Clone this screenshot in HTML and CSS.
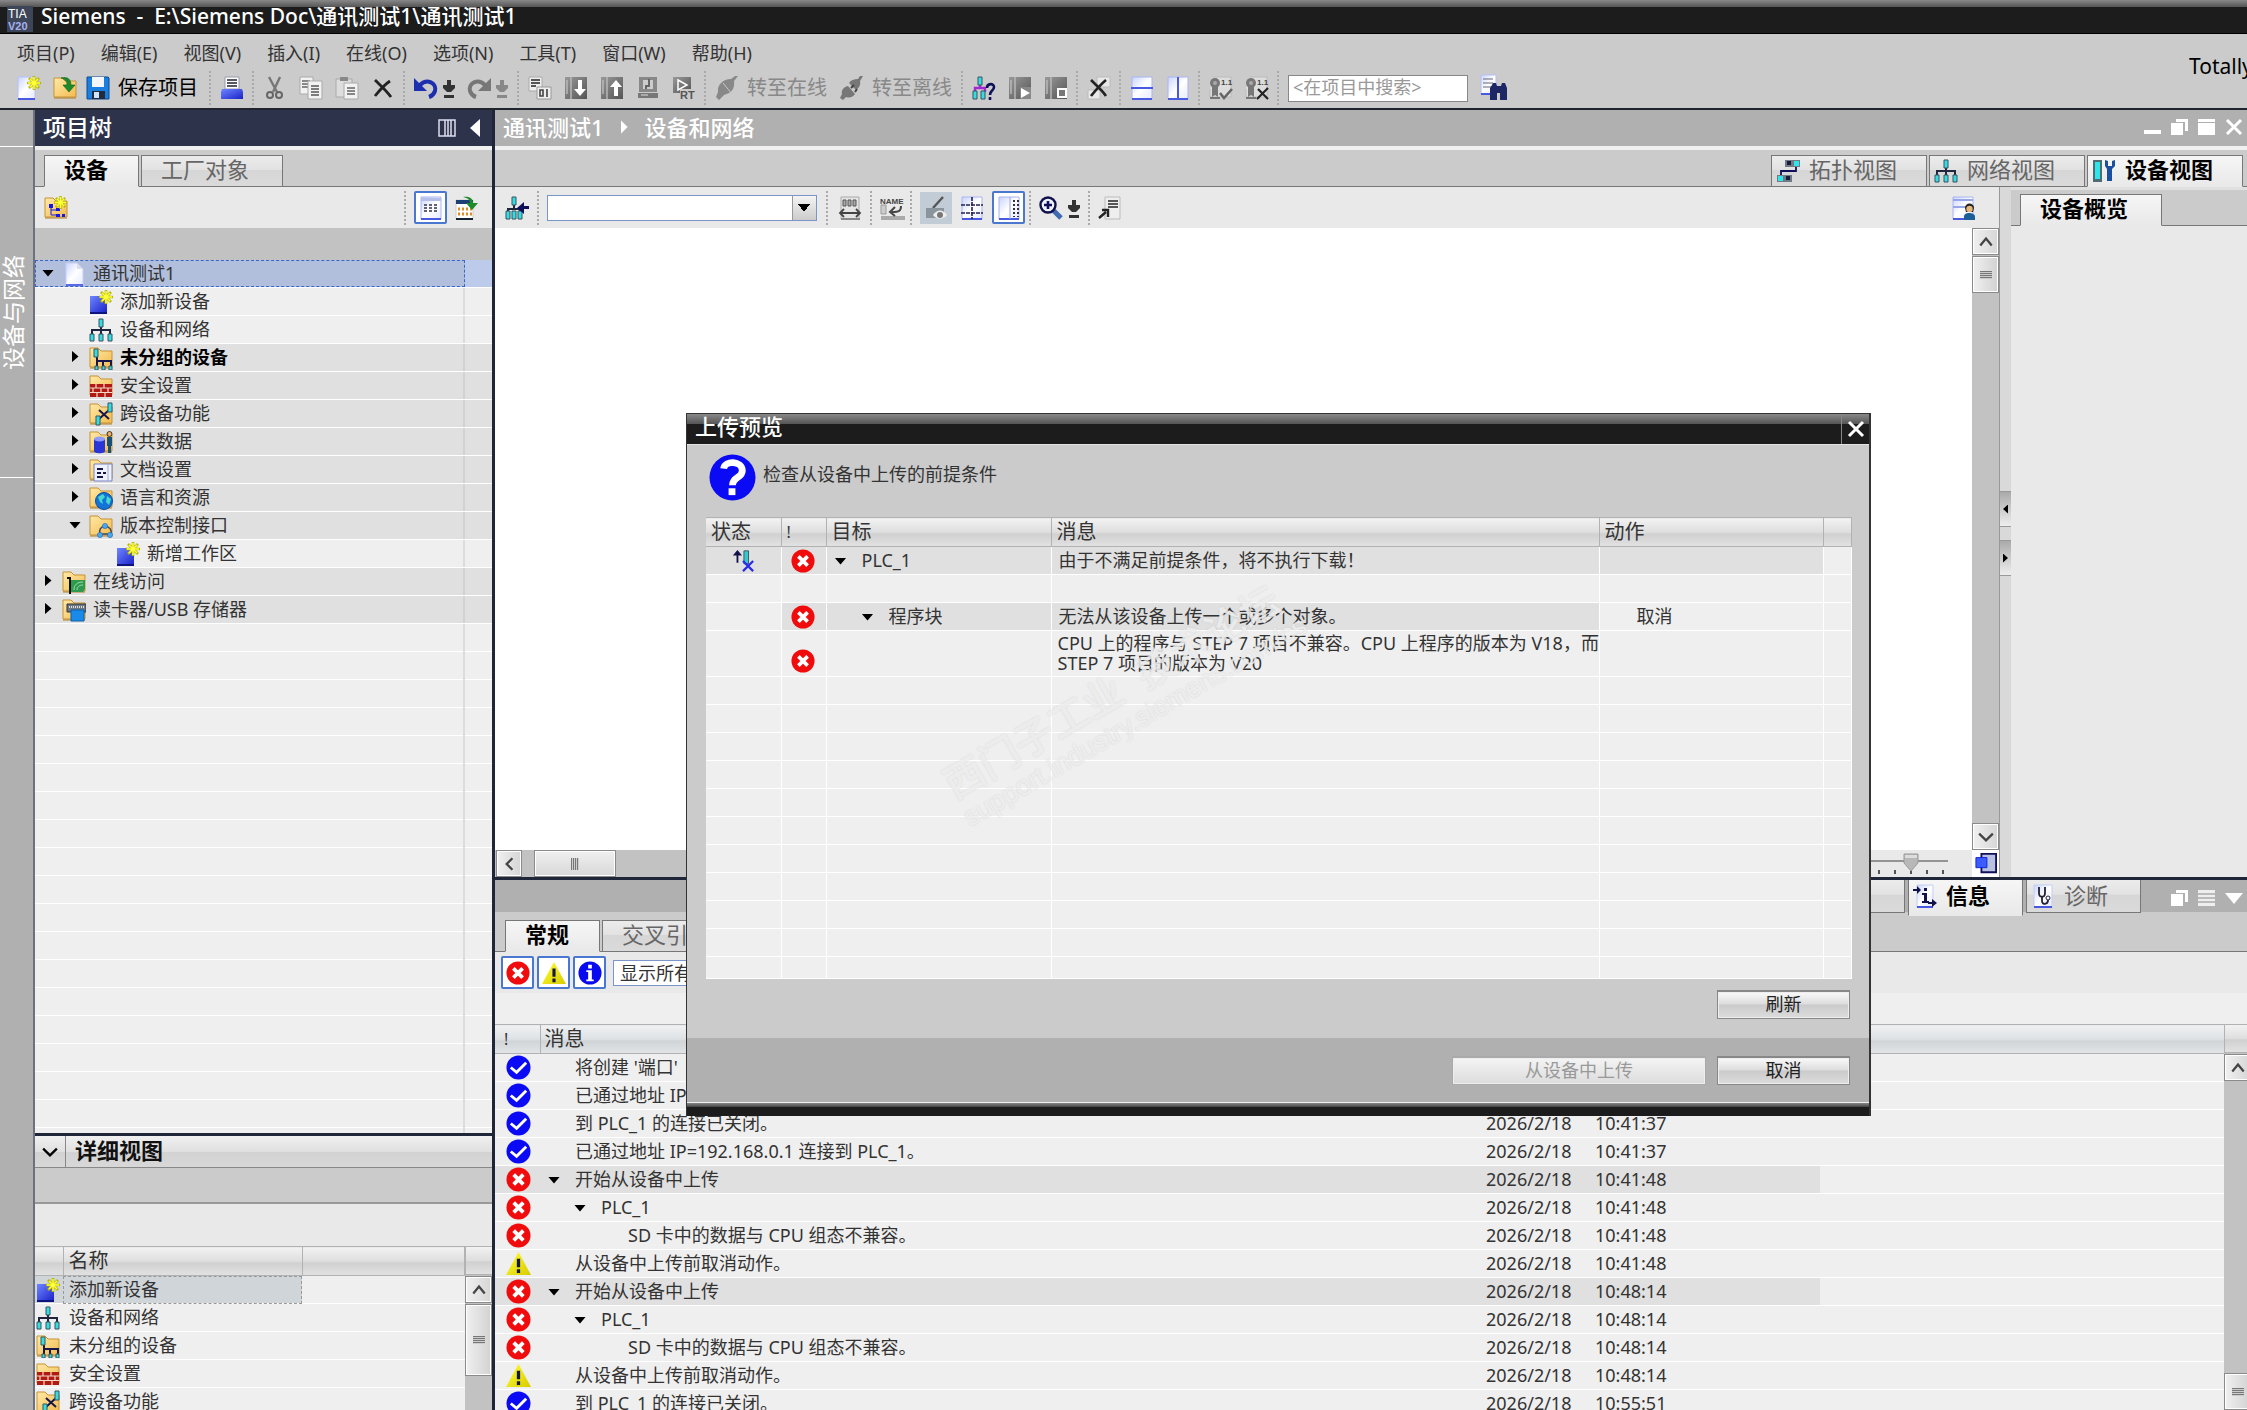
FILE: index.html
```html
<!DOCTYPE html>
<html lang="zh-CN">
<head>
<meta charset="utf-8">
<title>Siemens - 通讯测试1</title>
<link rel="stylesheet" href="styles.css">
</head>
<body>
<svg class="sprite" aria-hidden="true">
<defs>
<linearGradient id="gBlue" x1="0" y1="0" x2="1" y2="1"><stop offset="0" stop-color="#6f86ff"/><stop offset="1" stop-color="#1a22c8"/></linearGradient>
<linearGradient id="gPage" x1="0" y1="0" x2="1" y2="1"><stop offset="0" stop-color="#c9d4ff"/><stop offset=".5" stop-color="#fff"/><stop offset="1" stop-color="#e6eaff"/></linearGradient>
<linearGradient id="gFold" x1="0" y1="0" x2="1" y2="1"><stop offset="0" stop-color="#ffe9a8"/><stop offset="1" stop-color="#f2bb50"/></linearGradient>
<linearGradient id="gGray" x1="0" y1="0" x2="1" y2="1"><stop offset="0" stop-color="#999"/><stop offset="1" stop-color="#555"/></linearGradient>
<linearGradient id="gYel" x1="0" y1="0" x2="1" y2="1"><stop offset="0" stop-color="#ff3"/><stop offset="1" stop-color="#d8cc00"/></linearGradient>
<symbol id="star" viewBox="0 0 14 14"><path d="M7 0v14M0 7h14M2 2l10 10M12 2L2 12" stroke="#b9b800" stroke-width="2.6"/><path d="M7 1v12M1 7h12M3 3l8 8M11 3l-8 8" stroke="#ffff3c" stroke-width="1.5"/></symbol>
<symbol id="sheet" viewBox="0 0 24 24"><path d="M2 1h20v22H2z" fill="url(#gPage)" stroke="#aab4f0"/><path d="M2 23h20" stroke="#4a5ae0" stroke-width="2"/></symbol>
<symbol id="gsheet" viewBox="0 0 24 24"><path d="M3 1h18v22H3z" fill="#e4e4e4" stroke="#aaa"/><path d="M3 23h19" stroke="#888" stroke-width="2"/></symbol>
<symbol id="folder" viewBox="0 0 24 24"><path d="M1 21V2h8l3 3h11v16z" fill="url(#gFold)" stroke="#c79332"/><path d="M1 22h22" stroke="#b07c20"/></symbol>
<symbol id="new" viewBox="0 0 24 24"><path d="M1 1h17v22H1z" fill="url(#gPage)" stroke="#b4c0f4"/><path d="M1 23h17" stroke="#4a5ae0" stroke-width="2"/><use href="#star" x="10" y="0" width="14" height="14"/></symbol>
<symbol id="open" viewBox="0 0 24 24"><use href="#folder"/><path d="M8 2c7-2 10 2 10 7h4l-6 7-6-7h4c0-4-2-6-6-7z" fill="#1d8a2c" stroke="#0d5f18" stroke-width=".6"/></symbol>
<symbol id="save" viewBox="0 0 24 24"><path d="M1 1h21l1 1v21H1z" fill="#1b7fe0" stroke="#0a4a96"/><path d="M6 1h12v10H6z" fill="#f4f6fa"/><path d="M6 15h13v8H6z" fill="#222a3c"/><path d="M8 16h5v6H8z" fill="#cfe4ff"/></symbol>
<symbol id="print" viewBox="0 0 24 24"><path d="M5 1h14v12H5z" fill="#fff" stroke="#99a"/><path d="M7 4h10M7 7h10M7 10h10" stroke="#223" stroke-width="1.6"/><path d="M2 13h20l1 3v7H1v-7z" fill="url(#gBlue)"/></symbol>
<symbol id="cut" viewBox="0 0 24 24"><path d="M6 1l8 15M17 1L10 16" stroke="#777" stroke-width="2.4"/><circle cx="7" cy="19" r="3" fill="none" stroke="#666" stroke-width="2"/><circle cx="16" cy="19" r="3" fill="none" stroke="#666" stroke-width="2"/></symbol>
<symbol id="copy" viewBox="0 0 24 24"><path d="M1 1h13v17H1z" fill="#f2f2f2" stroke="#aaa"/><path d="M3 5h8M3 8h8M3 11h8" stroke="#666" stroke-width="1.5"/><path d="M9 5h14v18H9z" fill="#f2f2f2" stroke="#aaa"/><path d="M12 10h8M12 13h8M12 16h8M12 19h8" stroke="#555" stroke-width="1.5"/></symbol>
<symbol id="paste" viewBox="0 0 24 24"><path d="M1 3h16v18H1z" fill="#ddd" stroke="#aaa"/><path d="M5 1h8v4H5z" fill="#888"/><path d="M9 7h14v16H9z" fill="#f2f2f2" stroke="#aaa"/><path d="M12 12h8M12 15h8M12 18h8" stroke="#666" stroke-width="1.5"/></symbol>
<symbol id="x" viewBox="0 0 24 24"><path d="M4 4c5 5 11 10 16 17M19 5C13 9 8 15 4 20" stroke="#222" stroke-width="2.8" fill="none"/></symbol>
<symbol id="undo" viewBox="0 0 24 24"><path d="M6 9c7-7 17-2 15 6-1 3-3 5-6 6" fill="none" stroke="#1c2fae" stroke-width="4"/><path d="M0 2v13h13z" fill="#1c2fae"/></symbol>
<symbol id="redo" viewBox="0 0 24 24"><path d="M18 9C11 2 1 7 3 15c1 3 3 5 6 6" fill="none" stroke="#777" stroke-width="4"/><path d="M24 2v13H11z" fill="#777"/></symbol>
<symbol id="dd" viewBox="0 0 12 24"><path d="M4 4h4v5h4v3l-4 4H4l-4-4V9h4zM1 19h10v3H1z" fill="currentColor"/></symbol>
<symbol id="compile" viewBox="0 0 24 24"><path d="M1 1h13v14H1z" fill="#eee" stroke="#aaa"/><path d="M3 4h9M3 7h9M3 10h5" stroke="#555" stroke-width="1.8"/><path d="M9 11h14v12H9z" fill="#eee" stroke="#999"/><path d="M12 14h3v6h-3zM19 13v8" fill="none" stroke="#444" stroke-width="1.6"/></symbol>
<symbol id="rack" viewBox="0 0 24 24"><path d="M1 1h22v22H1z" fill="url(#gGray)"/><path d="M7 1v22M3 4v14" stroke="#bbb" stroke-width="1.4"/></symbol>
<symbol id="down" viewBox="0 0 24 24"><use href="#rack"/><path d="M14 4h4v9h4l-6 7-6-7h4z" fill="#fff"/></symbol>
<symbol id="up" viewBox="0 0 24 24"><use href="#rack"/><path d="M14 20h4v-9h4l-6-7-6 7h4z" fill="#fff"/></symbol>
<symbol id="pc" viewBox="0 0 24 24"><path d="M3 1h18v15H3z" fill="#888"/><path d="M7 4h10v9H7z" fill="#ccc"/><path d="M13 3v7h-3v3" stroke="#666" stroke-width="2" fill="none"/><path d="M2 17h20v5H2z" fill="#777"/><path d="M5 19h7" stroke="#ddd"/></symbol>
<symbol id="rt" viewBox="0 0 24 24"><path d="M1 1h18v16H1z" fill="url(#gGray)"/><path d="M6 4l9 5-9 5z" fill="none" stroke="#fff" stroke-width="1.5"/><path d="M8 13h16v11H8z" fill="#cbcbcb"/><text x="8" y="23" font-family="Liberation Sans" font-size="11" font-weight="bold" fill="#555">RT</text></symbol>
<symbol id="plug" viewBox="0 0 24 24"><path d="M23 0l-4 5c1 7-2 12-10 14l-5 5-3-3 2-5C2 9 8 3 16 3l4-3z" fill="#888"/><path d="M8 7l9 11" stroke="#c8c8c8"/></symbol>
<symbol id="unplug" viewBox="0 0 24 24"><path d="M23 0l-3 5c1 4-1 7-4 9L9 7c2-3 5-4 9-4l2-3zM8 10l7 8c-3 4-6 4-9 3l-3 3-3-2 2-4c-1-3 1-7 6-8z" fill="#777"/><path d="M11 12l3-3M15 16l2-3" stroke="#444" stroke-width="2"/></symbol>
<symbol id="net" viewBox="0 0 24 24"><path d="M12 8v4M3 16v-4h18v4M12 12v4" fill="none" stroke="#20263e" stroke-width="2"/><g fill="#35dce0" stroke="#375560"><path d="M10 1h4v8h-4zM1 16h4v7H1zM10 16h4v7h-4zM19 16h4v7h-4z"/></g></symbol>
<symbol id="netq" viewBox="0 0 24 24"><path d="M8 8v4M3 16v-4h10v4" fill="none" stroke="#a02ad0" stroke-width="2.4"/><g fill="#35dce0" stroke="#375560"><path d="M6 1h4v8H6zM1 15h4v8H1zM9 15h4v8H9z"/></g><path d="M15 12c0-5 7-5 7-1 0 4-4 3-4 8M18 21v3" fill="none" stroke="#10105a" stroke-width="2.6"/></symbol>
<symbol id="start" viewBox="0 0 24 24"><use href="#rack"/><path d="M12 11h11v12H12z" fill="#888"/><path d="M13 12l9 5-9 5z" fill="#fff"/></symbol>
<symbol id="stop" viewBox="0 0 24 24"><use href="#rack"/><path d="M14 13h8v8h-8z" fill="#777" stroke="#fff" stroke-width="2"/></symbol>
<symbol id="xdoc" viewBox="0 0 24 24"><path d="M10 1h13v10H10zM1 14h12v9H1z" fill="#e8e8e8" stroke="#bbb"/><path d="M4 4c5 5 11 10 15 16M19 4C13 9 8 15 4 20" stroke="#222" stroke-width="2.6" fill="none"/></symbol>
<symbol id="hsplit" viewBox="0 0 24 24"><use href="#sheet"/><path d="M1 12h22" stroke="#4a5ae0" stroke-width="2"/></symbol>
<symbol id="vsplit" viewBox="0 0 24 24"><use href="#sheet"/><path d="M12 1v22" stroke="#4a5ae0" stroke-width="2"/></symbol>
<symbol id="cert" viewBox="0 0 24 24"><path d="M4 1h18v20H1v-8" fill="#ddd" stroke="#bbb"/><path d="M1 22h10" stroke="#777" stroke-width="2"/><circle cx="6" cy="7" r="5" fill="#777"/><path d="M3 11h6v10l-3-2-3 2z" fill="#777"/><circle cx="6" cy="7" r="2" fill="#aaa"/><text x="12" y="9" font-family="Liberation Sans" font-size="8" font-weight="bold" fill="#444">1.1</text></symbol>
<symbol id="certok" viewBox="0 0 24 24"><use href="#cert"/><path d="M11 17l4 5 8-9" fill="none" stroke="#666" stroke-width="2.6"/></symbol>
<symbol id="certx" viewBox="0 0 24 24"><use href="#cert"/><path d="M13 13l10 10M23 12L12 23" fill="none" stroke="#222" stroke-width="2.2"/></symbol>
<symbol id="find" viewBox="0 0 28 28"><path d="M1 1h15v19H1z" fill="url(#gPage)" stroke="#b4c0f4"/><path d="M3 5h10M3 9h10M3 13h10" stroke="#667" stroke-width="1.2"/><path d="M1 20h12" stroke="#4a5ae0" stroke-width="2"/><path d="M12 11l1-2h3l1 3h4l1-3h3l2 5v12h-7v-7h-3v7h-7V14z" fill="#1d2766"/></symbol>
<symbol id="newgrp" viewBox="0 0 24 24"><use href="#folder"/><path d="M5 8h4v4H5zM12 12h4v3h-4zM12 18h4v3h-4zM18 18h3v3h-3z" fill="#1518e0"/><path d="M7 12v7h5M7 14h5" stroke="#1518e0" fill="none"/><use href="#star" x="10" y="0" width="13" height="13"/></symbol>
<symbol id="list" viewBox="0 0 24 24"><use href="#sheet"/><path d="M2 2h20v3H2z" fill="#b5bfe8"/><path d="M5 9h15M5 12h15M5 15h15" stroke="#334" stroke-width="1.500" stroke-dasharray="3 2"/></symbol>
<symbol id="export" viewBox="0 0 24 24"><path d="M1 4h17v19H1z" fill="#fff" stroke="#ccc"/><path d="M1 4h17v4H1z" fill="#1d3f78"/><path d="M3 13h14M3 18h14" stroke="#e08a20" stroke-width="3" stroke-dasharray="2 2"/><path d="M1 23h17" stroke="#123" stroke-width="2"/><path d="M8 1c7-1 10 2 10 6h5l-6 7-6-7h4c0-3-2-5-7-6z" fill="#1d8a2c"/></symbol>
<symbol id="netarrow" viewBox="0 0 24 24"><path d="M9 8v5M3 17v-4h12v4" fill="none" stroke="#20263e" stroke-width="2"/><g fill="#35dce0" stroke="#375560"><path d="M7 1h4v8H7zM1 15h4v8H1zM7 15h4v8H7zM13 15h4v8h-4z"/></g><path d="M24 10h-5V6l-7 6 7 6v-5h5z" fill="#10105a"/></symbol>
<symbol id="ruler" viewBox="0 0 24 24"><use href="#gsheet"/><path d="M5 4h3v6H5zM10 4h3v6h-3zM15 4h3v6h-3z" fill="#aaa" stroke="#555"/><path d="M2 17h20M6 13l-4 4 4 4M18 13l4 4-4 4" fill="none" stroke="#444" stroke-width="1.8"/></symbol>
<symbol id="name" viewBox="0 0 26 24"><text x="0" y="8" font-family="Liberation Sans" font-size="8" font-weight="bold" fill="#444">NAME</text><path d="M1 9h5v9H1z" fill="#ccc" stroke="#999"/><path d="M1 20h24v4H1z" fill="#aaa"/><path d="M21 10c0 5-2 6-9 6M15 11l-5 5 5 4" fill="none" stroke="#444" stroke-width="2"/></symbol>
<symbol id="eye" viewBox="0 0 24 24"><path d="M19 1L9 12" stroke="#555" stroke-width="2.4"/><path d="M2 12h18v10H2z" fill="#8a949c"/><path d="M9 19c4-6 10-6 14 0-4 5-10 5-14 0z" fill="#eee"/><circle cx="16" cy="19" r="3" fill="#777"/></symbol>
<symbol id="grid" viewBox="0 0 24 24"><use href="#sheet"/><path d="M1 9h22M1 17h22M12 1v22" stroke="#225" stroke-width="1.600" stroke-dasharray="4 1"/></symbol>
<symbol id="cols" viewBox="0 0 24 24"><use href="#sheet"/><path d="M13 1v22" stroke="#99a6e8"/><path d="M17 4v17M21 4v17" stroke="#333" stroke-width="2" stroke-dasharray="2 2"/></symbol>
<symbol id="zoom" viewBox="0 0 24 24"><path d="M14 14l8 8" stroke="#3f6bb0" stroke-width="5"/><circle cx="9" cy="9" r="7.500" fill="#eef2fb" stroke="#10104a" stroke-width="2.4"/><path d="M9 5v8M5 9h8" stroke="#10105a" stroke-width="2.6"/></symbol>
<symbol id="ref" viewBox="0 0 24 24"><path d="M7 1h15v22H7z" fill="#eee" stroke="#bbb"/><path d="M10 5h10M10 8h10M10 11h10" stroke="#555" stroke-width="1.8"/><path d="M1 22l7-6M4 14h6v7" fill="none" stroke="#222" stroke-width="2.4"/></symbol>
<symbol id="user" viewBox="0 0 24 24"><use href="#sheet"/><path d="M2 4h20M2 11h20" stroke="#99a6e8" stroke-width="2"/><path d="M13 24v-3c0-3 2-4 5-4s6 1 6 4v3z" fill="#1c5f98"/><path d="M14 12c0-6 9-6 9 0l-1 4h-7z" fill="#222"/><circle cx="18.500" cy="13" r="3.200" fill="#e8b878"/></symbol>
<symbol id="topo" viewBox="0 0 24 24"><path d="M9 1h15v7H9zM1 16h15v7H1z" fill="#6f7a86"/><path d="M18 2h5v5h-5zM2 17h5v5H2z" fill="#2ee6ea"/><path d="M11 2h4v4h-4zM10 17h4v4h-4z" fill="#181c38"/><path d="M20 8v4H5v4" fill="none" stroke="#10105a" stroke-width="1.800"/></symbol>
<symbol id="dev" viewBox="0 0 24 24"><path d="M1 1h9v22H1z" fill="#4f6b74"/><path d="M3 3h5v17H3z" fill="#2ee6ea"/><path d="M13 1v6l2 3v12h5V10l3-3V1l-3 1v5h-4V2z" fill="#1b4fa0"/></symbol>
<symbol id="page" viewBox="0 0 24 24"><path d="M4 1h11l6 6v16H4z" fill="url(#gPage)" stroke="#c4cdf4"/><path d="M15 1v6h6" fill="#dde" /><path d="M4 23h17" stroke="#5a6ae6" stroke-width="2"/></symbol>
<symbol id="add" viewBox="0 0 24 24"><path d="M1 6h17v17H1z" fill="url(#gBlue)"/><path d="M1 23h17" stroke="#0d1580" stroke-width="2"/><use href="#star" x="10" y="0" width="14" height="14"/></symbol>
<symbol id="ungrp" viewBox="0 0 24 24"><use href="#folder"/><path d="M8 10v5h14v5M14 15v5M8 15v5" fill="none" stroke="#16164a" stroke-width="2"/><g fill="#35dce0" stroke="#375560"><path d="M5 3h4v8H5zM6 20h3v4H6zM13 20h3v4h-3zM20 20h3v4h-3z"/></g></symbol>
<symbol id="wall" viewBox="0 0 24 24"><use href="#folder"/><path d="M1 10h22v13H1z" fill="#b01a12"/><path d="M1 14h22M1 18.500h22M7 10v4M15 10v4M4 14v4M12 14v4M19 14v4M8 19v4M16 19v4" stroke="#f4d8c8" stroke-width="1.2"/></symbol>
<symbol id="cross" viewBox="0 0 24 24"><use href="#folder"/><path d="M10 8l10 9M20 8l-10 9" stroke="#16164a" stroke-width="2"/><path d="M19 1h4v9h-4zM7 14h4v9H7z" fill="#35dce0" stroke="#375560"/></symbol>
<symbol id="data" viewBox="0 0 24 24"><use href="#folder"/><path d="M5 9v12c0 3 11 3 11 0V9z" fill="#2a35d8"/><ellipse cx="10.500" cy="9" rx="5.500" ry="2.500" fill="#8f9cff"/><path d="M18 7h5v9h-1v7h-3v-7h-1z" fill="#174f78"/><circle cx="20.500" cy="4" r="2.500" fill="#e8b060" stroke="#432"/></symbol>
<symbol id="docs" viewBox="0 0 24 24"><use href="#folder"/><path d="M5 6h18v17H5z" fill="#eef1ff" stroke="#7783c8"/><path d="M8 11h6M8 15h4M8 19h6M14 15h3" stroke="#16164a" stroke-width="1.800"/><path d="M19 6v17" stroke="#aab"/></symbol>
<symbol id="globe" viewBox="0 0 24 24"><use href="#folder"/><circle cx="15" cy="15" r="8.500" fill="#1273d8" stroke="#0b4f9a"/><path d="M9 11l5-3 2 3-3 3 1 4-3-2zM18 10l4 3-2 6-3-3z" fill="#46d8d0"/></symbol>
<symbol id="vci" viewBox="0 0 24 24"><use href="#folder"/><path d="M16 12c-5 1-6 4-5 8h11c1-4-1-7-6-8z" fill="none" stroke="#445" stroke-width="1.500"/><g fill="#4aa8f0" stroke="#1f66b0" stroke-width=".6"><circle cx="16" cy="12" r="2.600"/><circle cx="11" cy="21" r="2.600"/><circle cx="21" cy="21" r="2.600"/></g></symbol>
<symbol id="nic" viewBox="0 0 24 24"><use href="#folder"/><path d="M9 10h14v9l-2 3H9z" fill="#2e9a50"/><path d="M12 20c0-5 3-8 9-8M15 20c0-3 2-5 6-5" stroke="#9fe0a8" fill="none"/><path d="M5 8h3v16" fill="none" stroke="#111" stroke-width="2"/></symbol>
<symbol id="card" viewBox="0 0 24 24"><use href="#folder"/><path d="M5 6h19v8H5z" fill="#6c7884" stroke="#333"/><path d="M7 9h15" stroke="#ddd" stroke-width="2" stroke-dasharray="1 1"/><path d="M9 12h13v11H9z" fill="#1a8ae8" stroke="#0b5fae"/></symbol>
<symbol id="err" viewBox="0 0 26 26"><circle cx="13" cy="13" r="12.500" fill="#f00c0c"/><path d="M8 8l10 10M18 8L8 18" stroke="#fff" stroke-width="4"/></symbol>
<symbol id="ok" viewBox="0 0 26 26"><circle cx="13" cy="13" r="12.500" fill="#0a0af5"/><path d="M5 13l6 5L21 8" fill="none" stroke="#fff" stroke-width="3"/></symbol>
<symbol id="warn" viewBox="0 0 26 26"><path d="M13 1l13 24H0z" fill="url(#gYel)"/><path d="M13 8v9M13 19v4" stroke="#15154a" stroke-width="3.4"/></symbol>
<symbol id="info" viewBox="0 0 26 26"><circle cx="13" cy="13" r="12.500" fill="#0a0af0"/><path d="M11 4h4v4h-4zM9 10h6v10h2v2H9v-2h2v-8H9z" fill="#fff"/></symbol>
<symbol id="quest" viewBox="0 0 48 48"><circle cx="24" cy="24" r="23.500" fill="#0a0af5"/><path d="M15 15c1-9 19-8 19 2 0 8-10 6-10 15" fill="none" stroke="#fff" stroke-width="7"/><path d="M20 35h7v7h-7z" fill="#fff"/></symbol>
<symbol id="status" viewBox="0 0 26 26"><path d="M6 15V7H2l5-6 5 6H8v8z" fill="#12124a"/><path d="M14 2h5v14h-5z" fill="#35c8d0" stroke="#375560"/><path d="M13 13l11 11M24 13L13 24" stroke="#2a2ae8" stroke-width="2.400"/></symbol>
<symbol id="infotab" viewBox="0 0 24 24"><path d="M4 1h16v22H4z" fill="url(#gPage)" stroke="#c4cdf4"/><path d="M4 23h16" stroke="#4a5ae0" stroke-width="2"/><path d="M11 4h3v3h-3zM9 9h5v8h2v2H9v-2h2v-6H9zM0 5h4V2l4 4-4 4V7H0zM15 18h4v-3l5 4-5 4v-3h-4z" fill="#12124a"/></symbol>
<symbol id="diag" viewBox="0 0 24 24"><path d="M3 1h18v22H3z" fill="url(#gPage)" stroke="#c4cdf4"/><path d="M3 23h18" stroke="#4a5ae0" stroke-width="2"/><path d="M8 3v6c0 5 6 5 6 0V3M11 13v4c0 4 6 4 6-1" fill="none" stroke="#223" stroke-width="1.800"/><circle cx="17" cy="14" r="2" fill="none" stroke="#223"/></symbol>
<symbol id="min" viewBox="0 0 18 18"><path d="M0 12h17v4H0z" fill="#fff"/></symbol>
<symbol id="restore" viewBox="0 0 18 18"><path d="M0 5h12v12H0z" fill="#fff"/><path d="M5 1h12v12h-3V4H5z" fill="#fff"/></symbol>
<symbol id="max" viewBox="0 0 18 18"><path d="M0 1h17v3H0zM0 5h17v12H0z" fill="#fff"/></symbol>
<symbol id="lines" viewBox="0 0 18 18"><path d="M0 1h17v16H0z" fill="#eee"/><path d="M0 5h17M0 9h17M0 13h17" stroke="#aaa" stroke-width="1.500"/></symbol>
<symbol id="close" viewBox="0 0 18 18"><path d="M2 2l14 14M16 2L2 16" stroke="#fff" stroke-width="3"/></symbol>
<symbol id="tri" viewBox="0 0 18 18"><path d="M0 4h18l-9 11z" fill="#fff"/></symbol>
<symbol id="cup" viewBox="0 0 14 14"><path d="M2 10l5-6 5 6" fill="none" stroke="currentColor" stroke-width="2"/></symbol>
<symbol id="cdown" viewBox="0 0 14 14"><path d="M1 4l6 6 6-6" fill="none" stroke="currentColor" stroke-width="2"/></symbol>
<symbol id="cleft" viewBox="0 0 14 14"><path d="M10 2L5 7l5 5" fill="none" stroke="currentColor" stroke-width="2"/></symbol>
<symbol id="overview" viewBox="0 0 24 24"><path d="M7 1h16v20H7z" fill="#b8c2e0" stroke="#10105a" stroke-width="2"/><path d="M1 5h12v11H1z" fill="#3c5cff" stroke="#0a20d8"/></symbol>
</defs>
</svg>

<header class="titlebar">
  <svg class="logo" viewBox="0 0 26 26"><path d="M0 0h26v26H0z" fill="#3c4658"/><text x="1" y="12" font-family="Liberation Sans" font-size="12" fill="#fff">TIA</text><text x="1" y="24" font-family="Liberation Sans" font-size="11" font-weight="bold" fill="#a8b0f0">V20</text></svg>
  <h1>Siemens &nbsp;-&nbsp; E:\Siemens Doc\通讯测试1\通讯测试1</h1>
</header>

<div class="top">
  <div class="top-main">
    <nav class="menu">
      <button>项目(P)</button><button>编辑(E)</button><button>视图(V)</button><button>插入(I)</button><button>在线(O)</button><button>选项(N)</button><button>工具(T)</button><button>窗口(W)</button><button>帮助(H)</button>
    </nav>
    <div class="toolbar">
      <button aria-label="新建"><svg class="i"><use href="#new"/></svg></button>
      <button aria-label="打开"><svg class="i"><use href="#open"/></svg></button>
      <button class="lbl save"><svg class="i"><use href="#save"/></svg>保存项目</button>
      <i class="sep"></i>
      <button aria-label="打印"><svg class="i"><use href="#print"/></svg></button>
      <i class="sep"></i>
      <button aria-label="剪切"><svg class="i"><use href="#cut"/></svg></button>
      <button aria-label="复制"><svg class="i"><use href="#copy"/></svg></button>
      <button aria-label="粘贴"><svg class="i"><use href="#paste"/></svg></button>
      <button aria-label="删除"><svg class="i"><use href="#x"/></svg></button>
      <i class="sep"></i>
      <button class="pair" aria-label="撤消"><svg class="i"><use href="#undo"/></svg><svg class="dd"><use href="#dd"/></svg></button>
      <button class="pair" aria-label="重做"><svg class="i"><use href="#redo"/></svg><svg class="dd off"><use href="#dd"/></svg></button>
      <i class="sep"></i>
      <button aria-label="编译"><svg class="i"><use href="#compile"/></svg></button>
      <button aria-label="下载"><svg class="i"><use href="#down"/></svg></button>
      <button aria-label="上传"><svg class="i"><use href="#up"/></svg></button>
      <button aria-label="仿真"><svg class="i"><use href="#pc"/></svg></button>
      <button aria-label="运行系统"><svg class="i"><use href="#rt"/></svg></button>
      <i class="sep"></i>
      <button class="lbl off"><svg class="i"><use href="#plug"/></svg>转至在线</button>
      <button class="lbl off"><svg class="i"><use href="#unplug"/></svg>转至离线</button>
      <i class="sep"></i>
      <button aria-label="可访问设备"><svg class="i"><use href="#netq"/></svg></button>
      <button aria-label="启动"><svg class="i"><use href="#start"/></svg></button>
      <button aria-label="停止"><svg class="i"><use href="#stop"/></svg></button>
      <i class="sep"></i>
      <button aria-label="交叉引用"><svg class="i"><use href="#xdoc"/></svg></button>
      <i class="sep"></i>
      <button aria-label="水平拆分"><svg class="i"><use href="#hsplit"/></svg></button>
      <button aria-label="垂直拆分"><svg class="i"><use href="#vsplit"/></svg></button>
      <i class="sep"></i>
      <button aria-label="证书确认"><svg class="i"><use href="#certok"/></svg></button>
      <button aria-label="证书移除"><svg class="i"><use href="#certx"/></svg></button>
      <i class="sep"></i>
      <input class="search" type="text" placeholder="&lt;在项目中搜索&gt;" aria-label="在项目中搜索">
      <button aria-label="搜索"><svg class="i28"><use href="#find"/></svg></button>
    </div>
  </div>
  <div class="brand">Totally</div>
</div>

<div class="work">
  <aside class="rail"><div class="rail-top"></div><div class="rail-mid"><span>设备与网络</span></div></aside>

  <section class="side">
    <div class="side-head"><h2>项目树</h2>
      <svg class="cols3" viewBox="0 0 18 18"><path d="M1 1h16v16H1zM7 1v16M10 1v16M13 1v16" fill="none" stroke="#dde" stroke-width="1.500"/></svg>
      <svg class="fold" viewBox="0 0 10 18"><path d="M10 0v18L0 9z" fill="#fff"/></svg>
    </div>
    <div class="tabs side-tabs"><button class="tab on w95">设备</button><button class="tab w142">工厂对象</button></div>
    <div class="bar side-bar">
      <button aria-label="添加组"><svg class="i"><use href="#newgrp"/></svg></button>
      <i class="sep push"></i>
      <button class="boxed" aria-label="列表"><svg class="i"><use href="#list"/></svg></button>
      <button aria-label="导出"><svg class="i"><use href="#export"/></svg></button>
    </div>
    <div class="side-gap"></div>
    <ul class="tree">
      <li class="sel"><b class="ar dn"></b><svg class="i"><use href="#page"/></svg>通讯测试1</li>
      <li class="l1"><b class="ar"></b><svg class="i"><use href="#add"/></svg>添加新设备</li>
      <li class="l1"><b class="ar"></b><svg class="i"><use href="#net"/></svg>设备和网络</li>
      <li class="l1 dir strong"><b class="ar rt"></b><svg class="i"><use href="#ungrp"/></svg>未分组的设备</li>
      <li class="l1 dir"><b class="ar rt"></b><svg class="i"><use href="#wall"/></svg>安全设置</li>
      <li class="l1 dir"><b class="ar rt"></b><svg class="i"><use href="#cross"/></svg>跨设备功能</li>
      <li class="l1 dir"><b class="ar rt"></b><svg class="i"><use href="#data"/></svg>公共数据</li>
      <li class="l1 dir"><b class="ar rt"></b><svg class="i"><use href="#docs"/></svg>文档设置</li>
      <li class="l1 dir"><b class="ar rt"></b><svg class="i"><use href="#globe"/></svg>语言和资源</li>
      <li class="l1 dir"><b class="ar dn"></b><svg class="i"><use href="#vci"/></svg>版本控制接口</li>
      <li class="l2"><b class="ar"></b><svg class="i"><use href="#add"/></svg>新增工作区</li>
      <li class="dir"><b class="ar rt"></b><svg class="i"><use href="#nic"/></svg>在线访问</li>
      <li class="dir"><b class="ar rt"></b><svg class="i"><use href="#card"/></svg>读卡器/USB 存储器</li>
    </ul>
    <div class="detail">
      <div class="detail-head"><button aria-label="折叠"><svg class="chev"><use href="#cdown"/></svg></button><h2>详细视图</h2></div>
      <div class="detail-gap"></div><div class="detail-bar"></div>
      <div class="detail-grid">
        <table class="names">
          <thead><tr><th class="c-ic"></th><th class="c-name">名称</th><th></th></tr></thead>
          <tbody>
          <tr class="cur"><td><svg class="i"><use href="#add"/></svg></td><td>添加新设备</td><td></td></tr>
          <tr><td><svg class="i"><use href="#net"/></svg></td><td>设备和网络</td><td></td></tr>
          <tr><td><svg class="i"><use href="#ungrp"/></svg></td><td>未分组的设备</td><td></td></tr>
          <tr><td><svg class="i"><use href="#wall"/></svg></td><td>安全设置</td><td></td></tr>
          <tr><td><svg class="i"><use href="#cross"/></svg></td><td>跨设备功能</td><td></td></tr>
          </tbody>
        </table>
        <div class="vs"><div class="vs-head"></div><button aria-label="向上"><svg class="chev"><use href="#cup"/></svg></button><div class="thumb t72"></div></div>
      </div>
    </div>
  </section>

  <main class="main">
    <div class="crumbs"><span>通讯测试1</span><b class="cr"></b><span>设备和网络</span>
      <div class="wins"><svg><use href="#min"/></svg><svg><use href="#restore"/></svg><svg><use href="#max"/></svg><svg><use href="#close"/></svg></div>
    </div>
    <div class="tabs view-tabs">
      <button class="tab ic"><svg class="i"><use href="#topo"/></svg>拓扑视图</button>
      <button class="tab ic"><svg class="i"><use href="#net"/></svg>网络视图</button>
      <button class="tab ic on"><svg class="i"><use href="#dev"/></svg>设备视图</button>
    </div>
    <div class="editor">
      <div class="canvas-col">
        <div class="bar canvas-bar">
          <button aria-label="导航"><svg class="i"><use href="#netarrow"/></svg></button><i class="sep"></i>
          <select class="combo" aria-label="设备"><option></option></select><i class="sep loose"></i>
          <button aria-label="间距"><svg class="i"><use href="#ruler"/></svg></button><i class="sep"></i>
          <button aria-label="名称"><svg class="i26"><use href="#name"/></svg></button><i class="sep tight"></i>
          <button class="pressed" aria-label="显示地址"><svg class="i"><use href="#eye"/></svg></button>
          <button aria-label="分页"><svg class="i"><use href="#grid"/></svg></button>
          <button class="boxed" aria-label="表格"><svg class="i"><use href="#cols"/></svg></button><i class="sep tight"></i>
          <button class="pair" aria-label="缩放"><svg class="i"><use href="#zoom"/></svg><svg class="dd"><use href="#dd"/></svg></button><i class="sep"></i>
          <button aria-label="引用"><svg class="i"><use href="#ref"/></svg></button>
          <button class="push" aria-label="保存窗口设置"><svg class="i"><use href="#user"/></svg></button>
        </div>
        <div class="canvas-body">
          <div class="canvas"></div>
          <div class="vs"><button aria-label="向上"><svg class="chev"><use href="#cup"/></svg></button><div class="thumb t37"></div><button class="end" aria-label="向下"><svg class="chev"><use href="#cdown"/></svg></button></div>
        </div>
        <div class="hs">
          <div class="hs-track"><button aria-label="向左"><svg class="chev"><use href="#cleft"/></svg></button><div class="hthumb"></div></div>
          <svg class="slider" viewBox="0 0 120 27"><path d="M0 11h96" stroke="#777" stroke-width="1.500"/><path d="M11 20v4M27 20v4M43 20v4M59 20v4M75 20v4M91 20v4" stroke="#222" stroke-width="1.500"/><path d="M52 4h14v9l-7 8-7-8z" fill="#b8b8b8" stroke="#999"/><path d="M53 5h12v3H53z" fill="#ddd"/></svg>
          <button class="ov" aria-label="总览"><svg class="i22"><use href="#overview"/></svg></button>
        </div>
      </div>
      <div class="splitter"><b class="toL"></b><b class="toR"></b></div>
      <div class="overview">
        <div class="tabs"><button class="tab on w142">设备概览</button></div>
      </div>
    </div>

    <section class="inspector">
      <div class="insp-head">
        <div class="tab w115"></div>
        <button class="tab ic on w115"><svg class="i"><use href="#infotab"/></svg>信息</button>
        <button class="tab ic w115"><svg class="i"><use href="#diag"/></svg>诊断</button>
        <div class="wins"><svg><use href="#restore"/></svg><svg><use href="#lines"/></svg><svg><use href="#tri"/></svg></div>
      </div>
      <div class="tabs insp-tabs"><button class="tab on w95">常规</button><button class="tab w142">交叉引用</button></div>
      <div class="bar insp-bar">
        <button class="boxed" aria-label="错误"><svg class="i"><use href="#err"/></svg></button>
        <button class="boxed" aria-label="警告"><svg class="i"><use href="#warn"/></svg></button>
        <button class="boxed" aria-label="信息"><svg class="i"><use href="#info"/></svg></button>
        <select class="combo filter" aria-label="筛选"><option>显示所有消息</option></select>
      </div>
      <div class="insp-gap"></div>
      <div class="log-wrap">
        <table class="log">
          <thead><tr><th class="c1">!</th><th class="c2">消息</th><th class="c3"></th><th class="c4"></th><th></th></tr></thead>
          <tbody>
          <tr><td><svg class="i"><use href="#ok"/></svg></td><td><b class="ar"></b>将创建 '端口'</td><td></td><td></td><td></td></tr>
          <tr><td><svg class="i"><use href="#ok"/></svg></td><td><b class="ar"></b>已通过地址 IP=192.168.0.1</td><td></td><td></td><td></td></tr>
          <tr><td><svg class="i"><use href="#ok"/></svg></td><td><b class="ar"></b>到 PLC_1 的连接已关闭。</td><td>2026/2/18</td><td>10:41:37</td><td></td></tr>
          <tr><td><svg class="i"><use href="#ok"/></svg></td><td><b class="ar"></b>已通过地址 IP=192.168.0.1 连接到 PLC_1。</td><td>2026/2/18</td><td>10:41:37</td><td></td></tr>
          <tr class="grp"><td><svg class="i"><use href="#err"/></svg></td><td><b class="ar dn"></b>开始从设备中上传</td><td>2026/2/18</td><td>10:41:48</td><td></td></tr>
          <tr><td><svg class="i"><use href="#err"/></svg></td><td class="l1"><b class="ar dn"></b>PLC_1</td><td>2026/2/18</td><td>10:41:48</td><td></td></tr>
          <tr><td><svg class="i"><use href="#err"/></svg></td><td class="l2"><b class="ar"></b>SD 卡中的数据与 CPU 组态不兼容。</td><td>2026/2/18</td><td>10:41:48</td><td></td></tr>
          <tr><td><svg class="i"><use href="#warn"/></svg></td><td><b class="ar"></b>从设备中上传前取消动作。</td><td>2026/2/18</td><td>10:41:48</td><td></td></tr>
          <tr class="grp"><td><svg class="i"><use href="#err"/></svg></td><td><b class="ar dn"></b>开始从设备中上传</td><td>2026/2/18</td><td>10:48:14</td><td></td></tr>
          <tr><td><svg class="i"><use href="#err"/></svg></td><td class="l1"><b class="ar dn"></b>PLC_1</td><td>2026/2/18</td><td>10:48:14</td><td></td></tr>
          <tr><td><svg class="i"><use href="#err"/></svg></td><td class="l2"><b class="ar"></b>SD 卡中的数据与 CPU 组态不兼容。</td><td>2026/2/18</td><td>10:48:14</td><td></td></tr>
          <tr><td><svg class="i"><use href="#warn"/></svg></td><td><b class="ar"></b>从设备中上传前取消动作。</td><td>2026/2/18</td><td>10:48:14</td><td></td></tr>
          <tr><td><svg class="i"><use href="#ok"/></svg></td><td><b class="ar"></b>到 PLC_1 的连接已关闭。</td><td>2026/2/18</td><td>10:55:51</td><td></td></tr>
          </tbody>
        </table>
        <div class="vs"><div class="vs-head"></div><button aria-label="向上"><svg class="chev"><use href="#cup"/></svg></button><div class="thumb end t37"></div></div>
      </div>
    </section>
  </main>
</div>

<div class="dialog" role="dialog" aria-labelledby="dlg-title">
  <div class="dlg-title"><h2 id="dlg-title">上传预览</h2><button aria-label="关闭"><svg><use href="#close"/></svg></button></div>
  <div class="dlg-body">
    <div class="dlg-msg"><svg class="q"><use href="#quest"/></svg><p>检查从设备中上传的前提条件</p></div>
    <table class="pre">
      <colgroup><col class="p1"><col class="p2"><col class="p3"><col class="p4"><col class="p5"><col class="p6"></colgroup>
      <thead><tr><th>状态</th><th>!</th><th>目标</th><th>消息</th><th>动作</th><th></th></tr></thead>
      <tbody>
      <tr><td class="g mid"><svg class="i"><use href="#status"/></svg></td><td class="g mid"><svg class="i"><use href="#err"/></svg></td><td class="g"><b class="ar dn"></b>PLC_1</td><td class="g">由于不满足前提条件，将不执行下载！</td><td class="g"></td><td></td></tr>
      <tr><td></td><td></td><td></td><td></td><td></td><td></td></tr>
      <tr><td></td><td class="g mid"><svg class="i"><use href="#err"/></svg></td><td class="g l1"><b class="ar dn"></b>程序块</td><td class="g">无法从该设备上传一个或多个对象。</td><td class="act">取消</td><td></td></tr>
      <tr class="tall"><td></td><td class="mid"><svg class="i"><use href="#err"/></svg></td><td></td><td>CPU 上的程序与 STEP 7 项目不兼容。CPU 上程序的版本为 V18，而<br>STEP 7 项目的版本为 V20</td><td></td><td></td></tr>
      <tr><td></td><td></td><td></td><td></td><td></td><td></td></tr>
      <tr><td></td><td></td><td></td><td></td><td></td><td></td></tr>
      <tr><td></td><td></td><td></td><td></td><td></td><td></td></tr>
      <tr><td></td><td></td><td></td><td></td><td></td><td></td></tr>
      <tr><td></td><td></td><td></td><td></td><td></td><td></td></tr>
      <tr><td></td><td></td><td></td><td></td><td></td><td></td></tr>
      <tr><td></td><td></td><td></td><td></td><td></td><td></td></tr>
      <tr><td></td><td></td><td></td><td></td><td></td><td></td></tr>
      <tr><td></td><td></td><td></td><td></td><td></td><td></td></tr>
      <tr><td></td><td></td><td></td><td></td><td></td><td></td></tr>
      <tr class="last"><td></td><td></td><td></td><td></td><td></td><td></td></tr>
      </tbody>
    </table>
    <div class="dlg-refresh"><button class="btn">刷新</button></div>
  </div>
  <div class="dlg-foot"><button class="btn wide" disabled>从设备中上传</button><button class="btn">取消</button></div>
  <div class="dlg-edge"></div>
  <div class="mark" aria-hidden="true"><p>西门子工业&nbsp; 技术论坛</p><p class="url">support.industry.siemens.com/cs</p></div>
</div>
</body>
</html>
```

FILE: styles.css
```css
* { box-sizing: border-box; }
html, body { height: 100%; }
body {
  margin: 0; display: flex; flex-direction: column; overflow: hidden; position: relative;
  background: #cbcbcb; color: #333;
  font: 18px/24px "Noto Sans", "Noto Sans CJK SC", sans-serif;
}
h1, h2, p, ul { margin: 0; padding: 0; }
ul { list-style: none; }
button, input, select { font: inherit; color: inherit; margin: 0; }
button { border: 0; padding: 0; background: none; display: flex; align-items: center; justify-content: center; white-space: nowrap; flex: none; }
svg { display: block; flex: none; }
table { border-collapse: collapse; table-layout: fixed; }
th { font-weight: 400; text-align: left; padding: 0 0 0 5px; white-space: nowrap; font-size: 20px; border: 1px solid #b2b2b2; border-left: 0; background: linear-gradient(#f2f2f2 0, #dedede 50%, #d0d0d0 55%, #e2e2e2 100%); }
td { padding: 0 0 2px; white-space: nowrap; }
.sprite { position: absolute; width: 0; height: 0; }
.i { width: 24px; height: 24px; }
.i22 { width: 22px; height: 22px; }
.i26 { width: 26px; height: 24px; }
.i28 { width: 28px; height: 28px; }
.dd { width: 12px; height: 24px; }
.chev { width: 16px; height: 16px; }
.off { color: #888; }
.push { margin-left: auto; }

/* title bar and main menu */
.titlebar { height: 34px; flex: none; display: flex; align-items: center; gap: 8px; padding: 5px 7px 0; background: linear-gradient(#888 0, #555 7px, #1c1c1c 7px); border-bottom: 1px solid #000; color: #fff; }
.titlebar h1 { font-size: 21px; line-height: 26px; font-weight: 500; padding-bottom: 6px; }
.logo { width: 26px; height: 26px; }
.top { display: flex; height: 76px; flex: none; border-bottom: 2px solid #20242e; }
.top-main { flex: 1; min-width: 0; }
.menu { display: flex; gap: 26px; padding: 7px 0 0 17px; height: 36px; }
.menu button { height: 24px; }
.toolbar { display: flex; align-items: center; gap: 12px; padding-left: 17px; height: 36px; }
.toolbar .lbl { gap: 8px; font-size: 20px; padding-bottom: 1px; }
.toolbar .save { margin: 0 3px 0 -3px; color: #000; }
.toolbar .off { margin-right: 1px; }
.pair { gap: 5px; }
.sep { width: 2px; height: 34px; border-left: 2px dotted #aaa; flex: none; }
.toolbar .sep { margin: 0 -3px 0 -4px; }
.search { width: 180px; height: 27px; border: 1px solid #888; background: #fff; padding: 0 4px 2px; font-size: 18px; border-radius: 0; }
.search::placeholder { color: #999; opacity: 1; }
.brand { width: 58px; padding-top: 20px; font-size: 21px; color: #000; overflow: hidden; white-space: nowrap; }

/* left rail and project tree */
.work { flex: 1; min-height: 0; display: flex; }
.rail { width: 35px; flex: none; background: #b0b0b0; border-right: 2px solid #6c717b; color: #fff; }
.rail-top { height: 37px; border-bottom: 1px solid #fff; }
.rail-mid { height: 331px; border-bottom: 1px solid #fff; display: flex; align-items: center; }
.rail-mid span { writing-mode: vertical-rl; text-orientation: sideways; transform: rotate(180deg); font-size: 23px; line-height: 26px; }
.side { width: 460px; flex: none; display: flex; flex-direction: column; border-right: 3px solid #20263a; background: #efefef; min-height: 0; }
.side-head { height: 36px; flex: none; background: #2d334b; color: #fff; display: flex; align-items: center; padding: 0 12px 0 8px; }
.side-head h2 { font-size: 23px; line-height: 34px; font-weight: 500; flex: 1; padding-bottom: 3px; }
.cols3 { width: 18px; height: 18px; margin-right: 14px; }
.fold { width: 10px; height: 18px; }
.tabs { display: flex; align-items: flex-end; height: 36px; flex: none; background: #cbcbcb; gap: 2px; box-shadow: inset 0 -1px #777; }
.side-tabs, .view-tabs { height: 41px; border-top: 4px solid #f0f0f0; }
.tab { height: 32px; border: 1px solid #777; background: linear-gradient(#ececec 0, #e2e2e2 45%, #d6d6d6 46%, #dadada 100%); color: #666; font-size: 22px; padding-bottom: 5px; }
.tab .i { margin-top: 4px; }
.tab.on { background: linear-gradient(#f6f6f6, #e9e9e9); border-bottom-color: #e9e9e9; color: #000; font-weight: 700; }
.w95 { width: 95px; }
.w142 { width: 142px; }
.w115 { width: 115px; }
.tab.w95, .tab.w142 { justify-content: flex-start; padding-left: 19px; }
.side-tabs { padding-left: 9px; }
.bar { display: flex; align-items: center; height: 41px; flex: none; background: #e9e9e9; gap: 8px; }
.side-bar { padding: 0 13px 0 9px; }
.boxed { width: 33px; height: 33px; border: 2px solid #4a78d0; border-radius: 2px; background: #fff; }
.pressed { width: 32px; height: 32px; background: #c2ccd6; }
.side-gap { height: 32px; flex: none; background: #c2c2c2; }

.ar { width: 20px; height: 12px; flex: none; display: inline-block; margin-right: 4px; }
.ar.dn::before, .ar.rt::before { content: ""; display: block; margin: 3px auto 0; width: 12px; height: 7px; background: #000; clip-path: polygon(0 0, 100% 0, 50% 100%); }
.ar.rt::before { width: 7px; height: 12px; margin-top: 0; clip-path: polygon(0 0, 100% 50%, 0 100%); }

.tree { flex: 1; min-height: 0; overflow: hidden; background: linear-gradient(90deg, transparent 428px, #dcdcdc 428px, #dcdcdc 430px, transparent 430px), repeating-linear-gradient(#efefef 0, #efefef 27px, #fff 27px, #fff 28px); }
.tree li { height: 28px; display: flex; align-items: center; padding: 0 0 2px 3px; border-bottom: 1px solid #fff; }
.tree li .i { margin: 2px 7px 0 0; }
.tree li.l1 { padding-left: 30px; }
.tree li.l2 { padding-left: 57px; }
.tree .dir { background: linear-gradient(90deg, #e0e0e0 428px, #d2d2d2 428px, #d2d2d2 430px, #e0e0e0 430px); }
.tree .strong { font-weight: 700; color: #000; }
.tree .sel { background: linear-gradient(90deg, #b2bfdc 430px, #bdcbea 430px); position: relative; }
.tree .sel::after { content: ""; position: absolute; inset: 0 27px 0 0; border: 1px dashed #3a66c8; }

.detail { height: 277px; flex: none; border-top: 3px solid #20263a; display: flex; flex-direction: column; }
.detail-head { height: 32px; flex: none; display: flex; background: linear-gradient(#f0f0f0 0, #e0e0e0 50%, #d2d2d2 51%, #d8d8d8 100%); border-bottom: 1px solid #888; }
.detail-head button { width: 31px; border-right: 1px solid #888; color: #000; }
.detail-head h2 { font-size: 22px; line-height: 29px; padding-left: 9px; color: #111; }
.detail-gap { height: 36px; flex: none; background: #cbcbcb; border-bottom: 2px solid #999; }
.detail-bar { height: 42px; flex: none; background: #e9e9e9; }
.detail-grid { display: flex; flex: 1; min-height: 0; overflow: hidden; }
.names { flex: 1; width: 430px; align-self: flex-start; }
.c-ic { width: 28px; }
.c-name { width: 239px; }
.names th { height: 29px; }
.names td { height: 28px; border-bottom: 1px solid #fff; padding-left: 6px; }
.names td:first-child { padding: 0 0 0 1px; }
.names .cur td:nth-child(-n+2) { background: #d0d5da; }
.names .cur td:nth-child(2) { outline: 1px dashed #999; outline-offset: -1px; }

/* scroll bars */
.vs { width: 27px; flex: none; background: #c2c2c2; display: flex; flex-direction: column; gap: 1px; }
.vs-head { height: 29px; flex: none; background: linear-gradient(#f2f2f2 0, #dedede 50%, #d0d0d0 55%, #e2e2e2 100%); border: 1px solid #b2b2b2; border-right: 0; }
.vs button, .hs button, .thumb, .hthumb { border: 1px solid #8a8a8a; background: linear-gradient(90deg, #f0f0f0, #d6d6d6); box-shadow: inset 0 0 0 1px #fff; color: #444; }
.vs button { height: 27px; }
.thumb { flex: none; background: repeating-linear-gradient(#777 0, #777 1px, #ccc 1px, #ccc 2px) center/12px 8px no-repeat, linear-gradient(90deg, #f0f0f0, #d2d2d2); }
.t37 { height: 37px; }
.t72 { height: 72px; }
.vs .end { margin-top: auto; }

/* device editor */
.main { flex: 1; min-width: 0; display: flex; flex-direction: column; }
.crumbs { height: 36px; flex: none; background: #b0b0b0; color: #fff; display: flex; align-items: center; gap: 17px; padding: 0 4px 2px 8px; font-size: 22px; font-weight: 500; }
.cr { width: 7px; height: 14px; background: #fff; clip-path: polygon(0 0, 100% 50%, 0 100%); }
.wins { margin-left: auto; display: flex; gap: 9px; }
.wins svg { width: 18px; height: 18px; }
.view-tabs { justify-content: flex-end; padding-right: 4px; }
.view-tabs .tab { width: 156px; }
.tab.ic { justify-content: flex-start; padding-left: 4px; gap: 9px; }
.editor { flex: 1; min-height: 0; display: flex; }
.canvas-col { flex: 1; min-width: 0; display: flex; flex-direction: column; background: #e9e9e9; }
.canvas-bar { padding: 0 24px 0 10px; }
.bar .tight { margin-left: -4px; }
.bar .loose { margin: 0 2px 0 1px; }
.combo { width: 270px; height: 26px; border: 1px solid #7c95c8; border-radius: 0; appearance: none; padding: 0 6px; background: linear-gradient(to bottom right, #000 50%, transparent 50%) right 6px center/6px 8px no-repeat, linear-gradient(to bottom left, #000 50%, transparent 50%) right 12px center/6px 8px no-repeat, linear-gradient(#999, #999) right 23px top/1px 100% no-repeat, linear-gradient(#f4f4f4, #ccc) right/23px 100% no-repeat, #fff; }
.canvas-body { flex: 1; min-height: 0; display: flex; }
.canvas { flex: 1; background: #fff; }
.hs { height: 27px; flex: none; display: flex; }
.hs-track { flex: 1; background: #c2c2c2; display: flex; gap: 12px; padding-left: 1px; }
.hs button { width: 26px; }
.hthumb { width: 82px; background: repeating-linear-gradient(90deg, #777 0, #777 1px, #ccc 1px, #ccc 2px) center/8px 12px no-repeat, linear-gradient(#f0f0f0, #d8d8d8); }
.slider { width: 120px; height: 27px; }
.hs .ov { width: 27px; background: #fff; border: 0; box-shadow: none; }
.splitter { width: 12px; flex: none; background: #d9d9d9; border-left: 1px solid #999; display: flex; flex-direction: column; gap: 13px; padding-top: 304px; }
.splitter b { height: 36px; border: solid #999; border-width: 1px 0; background: linear-gradient(#aaa, #eee); display: flex; align-items: center; justify-content: center; }
.splitter b::before { content: ""; width: 5px; height: 9px; background: #000; clip-path: polygon(0 0, 100% 50%, 0 100%); }
.splitter .toL::before { clip-path: polygon(100% 0, 100% 100%, 0 50%); }
.overview { width: 236px; flex: none; background: #e9e9e9; border-top: 3px solid #e0e0e0; }
.overview .tabs { padding-left: 9px; }

/* inspector */
.inspector { height: 533px; flex: none; border-top: 3px solid #20263a; display: flex; flex-direction: column; background: #efefef; }
.insp-head { height: 36px; flex: none; background: linear-gradient(#b0b0b0 32px, #cbcbcb 32px); display: flex; justify-content: flex-end; gap: 3px; padding-right: 4px; }
.insp-head .tab { height: 33px; border-top: 0; padding-bottom: 3px; }
.insp-head .tab .i { margin-top: 2px; }
.insp-head .tab.on { height: 36px; padding-bottom: 6px; }
.insp-head .wins { margin-left: 27px; padding-top: 9px; }
.insp-tabs { padding-left: 10px; }
.insp-bar { padding-left: 6px; gap: 3px; }
.filter { margin-left: 4px; }
.insp-gap { height: 31px; flex: none; }
.log-wrap { flex: 1; min-height: 0; overflow: hidden; display: flex; margin-right: -4px; }
.log { flex: 1; width: 100%; align-self: flex-start; }
.log th { height: 29px; background: linear-gradient(#f0f1f2 0, #dde1e4 50%, #d0d4d7 55%, #e2e5e7 100%); padding-left: 4px; }
.log th:first-child { padding-left: 9px; font-size: 16px; }
.log th:nth-child(n+2) { border-right: 0; }
.c1 { width: 45px; }
.c2 { width: 946px; }
.c3 { width: 109px; }
.c4 { width: 225px; }
.log td { height: 28px; border-bottom: 1px solid #fff; }
.log td:first-child { padding: 0 0 0 11px; }
.log td:nth-child(2) { padding-left: 8px; }
.log .ar { width: 12px; margin: 0 15px 0 0; }
.log td:nth-child(2).l1 { padding-left: 34px; }
.log td:nth-child(2).l2 { padding-left: 61px; }
.log .grp td:nth-child(-n+4) { background: #e0e0e0; }
.log .i { width: 25px; height: 25px; }

/* upload preview window */
.dialog { position: absolute; left: 686px; top: 413px; width: 1185px; display: flex; flex-direction: column; border: 1px solid #333; border-width: 1px 2px 0 1px; background: #cbcbcb; }
.dlg-title { height: 30px; display: flex; color: #fff; background: linear-gradient(#888 0, #555 10px, #1c1c1c 10px); }
.dlg-title h2 { font-size: 22px; line-height: 25px; font-weight: 500; flex: 1; padding-left: 8px; }
.dlg-title button { width: 28px; border-left: 1px solid #888; }
.dlg-title svg { width: 18px; height: 18px; }
.dlg-body { height: 594px; padding: 9px 19px 0 19px; display: flex; flex-direction: column; border-top: 1px solid #e4e4e4; }
.dlg-msg { display: flex; gap: 7px; height: 63px; padding-left: 3px; }
.dlg-msg p { padding-top: 8px; }
.q { width: 47px; height: 47px; }
.pre { width: 1145px; background: #efefef; }
.p1 { width: 75px; } .p2 { width: 45px; } .p3 { width: 225px; } .p4 { width: 548px; } .p5 { width: 224px; } .p6 { width: 28px; }
.pre th { height: 29px; }
.pre th:nth-child(2) { font-size: 16px; }
.pre td { height: 28px; border: 1px solid #fff; border-width: 0 1px 1px 0; padding-left: 7px; }
.pre td:nth-child(3) { padding-left: 8px; }
.pre td.l1 { padding-left: 35px; }
.pre td.act { padding-left: 37px; }
.pre .g { background: #e0e0e0; }
.pre td.mid { padding: 0 0 0 9px; }
.pre td.g.mid:first-child { padding-left: 25px; }
.pre .ar { width: 12px; margin-right: 15px; }
.pre .tall td { height: 46px; line-height: 20px; padding-left: 6px; }
.pre .tall td.mid { padding: 14px 0 0 9px; }
.pre .last td { height: 22px; }
.dlg-refresh { display: flex; justify-content: flex-end; padding-top: 11px; }
.btn { width: 133px; height: 29px; padding-bottom: 2px; border: 1px solid #888; border-top-width: 2px; background: linear-gradient(#fafafa 0, #dedede 45%, #cbcbcb 50%, #dcdcdc 100%); box-shadow: inset 0 0 0 1px #eee; color: #222; }
.btn.wide { width: 254px; color: #999; background: linear-gradient(#f4f4f4, #dcdcdc); border-color: #aaa; }
.dlg-foot { height: 64px; display: flex; gap: 11px; justify-content: flex-end; padding: 18px 19px 0; background: #b0b0b0; }
.dlg-edge { height: 14px; background: linear-gradient(#eee 0, #eee 1px, #888 1px, #444 5px, #1c1c1c 5px); }
.mark { position: absolute; left: 249px; top: 354px; transform: rotate(-30deg); transform-origin: 0 0; color: rgba(243, 243, 243, .8); text-shadow: 0 0 2px rgba(170, 170, 170, .4); white-space: nowrap; pointer-events: none; }
.mark p { font-size: 40px; line-height: 44px; font-weight: 500; }
.mark .url { font: 27px/30px "Liberation Sans", Arial, sans-serif; }
```
